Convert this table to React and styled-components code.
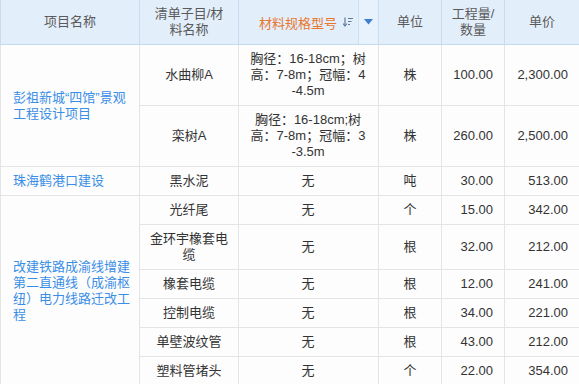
import styled, { createGlobalStyle } from "styled-components";

const GlobalStyle = createGlobalStyle`
  html, body {
    margin: 0;
    padding: 0;
    background: #fdfdfd;
    overflow: hidden;
  }
  body {
    font-family: "Liberation Sans", "Noto Sans CJK SC", sans-serif;
    font-size: 13px;
    color: #333;
  }
`;

const Table = styled.table`
  border-collapse: separate;
  border-spacing: 0;
  table-layout: fixed;
  width: 580px;
  background: #fdfdfd;
`;

const Col = styled.col`
  width: ${(p) => p.$w}px;
`;

const HeadCell = styled.th`
  box-sizing: border-box;
  height: 45px;
  padding: 6px ${(p) => p.$pad || 6}px;
  background: #e3eefb;
  border-right: 1px solid #c9dcf0;
  border-bottom: 1px solid #c5d9ef;
  border-left: ${(p) => (p.$first ? "1px solid #c9dcf0" : "none")};
  font-weight: normal;
  line-height: 16px;
  color: #5a5a5a;
  text-align: center;
  vertical-align: middle;
`;

const SortHead = styled.th`
  box-sizing: border-box;
  height: 45px;
  padding: 0;
  background: #e3eefb;
  border-right: 1px solid #c9dcf0;
  border-bottom: 1px solid #c5d9ef;
  font-weight: normal;
`;

const SortInner = styled.div`
  display: flex;
  height: 44px;
`;

const SortLabel = styled.div`
  flex: 1;
  display: flex;
  align-items: center;
  gap: 6px;
  padding-left: 20px;
  color: #e8772e;
`;

const FilterBox = styled.div`
  width: 19px;
  display: flex;
  align-items: center;
  justify-content: center;
  background: #e8f2fd;
  border-left: 1px solid #cfe0f3;
`;

const Cell = styled.td`
  box-sizing: border-box;
  padding: 6px ${(p) => p.$padR ?? 11}px 6px ${(p) => p.$padL ?? 11}px;
  border-right: 1px solid #e4e4e4;
  border-bottom: 1px solid #e4e4e4;
  border-left: ${(p) => (p.$first ? "1px solid #e4e4e4" : "none")};
  line-height: 16px;
  text-align: ${(p) => p.$align || "center"};
  vertical-align: middle;
  color: ${(p) => (p.$link ? "#3a8ee6" : "#333")};
  word-break: break-all;
`;

const Row = styled.tr`
  height: 29px;
`;

const SortIcon = () => (
  <svg width="10" height="10" viewBox="0 0 10 10">
    <path d="M2 0.5V9" stroke="#5d7a9c" strokeWidth="1.2" />
    <path d="M0 6.5L2 9L4 6.5" stroke="#5d7a9c" strokeWidth="1.1" fill="none" />
    <path d="M5 1.5H10M5 4.5H8.5M5 7.5H7" stroke="#5d7a9c" strokeWidth="1.2" />
  </svg>
);

const Caret = () => (
  <svg width="9" height="6" viewBox="0 0 9 6">
    <path d="M0 0H9L4.5 5.5Z" fill="#3d7fd4" />
  </svg>
);

const groups = [
  {
    project: "彭祖新城“四馆”景观工程设计项目",
    items: [
      ["水曲柳A", "胸径：16-18cm；树高：7-8m；冠幅：4-4.5m", "株", "100.00", "2,300.00"],
      ["栾树A", "胸径：16-18cm;树高：7-8m；冠幅：3-3.5m", "株", "260.00", "2,500.00"],
    ],
  },
  {
    project: "珠海鹤港口建设",
    items: [["黑水泥", "无", "吨", "30.00", "513.00"]],
  },
  {
    project: "改建铁路成渝线增建第二直通线（成渝枢纽）电力线路迁改工程",
    items: [
      ["光纤尾", "无", "个", "15.00", "342.00"],
      ["金环宇橡套电缆", "无", "根", "32.00", "212.00"],
      ["橡套电缆", "无", "根", "12.00", "241.00"],
      ["控制电缆", "无", "根", "34.00", "221.00"],
      ["单壁波纹管", "无", "根", "43.00", "212.00"],
      ["塑料管堵头", "无", "个", "22.00", "354.00"],
    ],
  },
];

export default function App() {
  return (
    <>
      <GlobalStyle />
      <Table>
        <colgroup>
          <Col $w={140} />
          <Col $w={99} />
          <Col $w={140} />
          <Col $w={63} />
          <Col $w={63} />
          <Col $w={75} />
        </colgroup>
        <thead>
          <tr>
            <HeadCell $first>项目名称</HeadCell>
            <HeadCell $pad={9}>清单子目/材料名称</HeadCell>
            <SortHead>
              <SortInner>
                <SortLabel>
                  材料规格型号
                  <SortIcon />
                </SortLabel>
                <FilterBox>
                  <Caret />
                </FilterBox>
              </SortInner>
            </SortHead>
            <HeadCell>单位</HeadCell>
            <HeadCell>工程量/数量</HeadCell>
            <HeadCell>单价</HeadCell>
          </tr>
        </thead>
        <tbody>
          {groups.map((g) =>
            g.items.map((it, i) => (
              <Row key={g.project + it[0]}>
                {i === 0 && (
                  <Cell
                    $first
                    $link
                    $align="left"
                    $padL={12}
                    $padR={8}
                    rowSpan={g.items.length}
                  >
                    {g.project}
                  </Cell>
                )}
                <Cell $padL={9} $padR={9}>{it[0]}</Cell>
                <Cell $padL={10}>{it[1]}</Cell>
                <Cell>{it[2]}</Cell>
                <Cell $align="right">{it[3]}</Cell>
                <Cell $align="right">{it[4]}</Cell>
              </Row>
            ))
          )}
        </tbody>
      </Table>
    </>
  );
}
